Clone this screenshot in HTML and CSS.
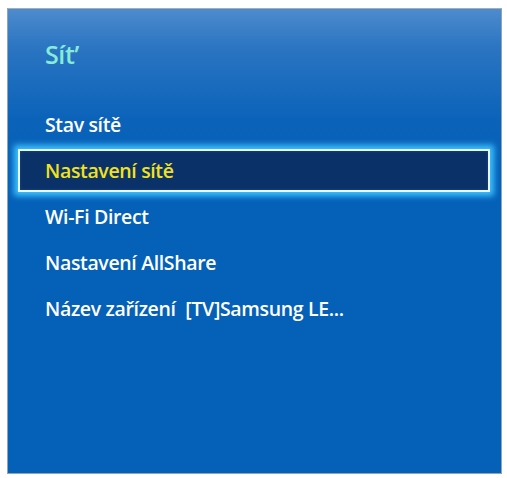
FILE: index.html
```html
<!DOCTYPE html>
<html lang="cs">
<head>
<meta charset="utf-8">
<title>Síť</title>
<link rel="stylesheet" href="styles.css">
</head>
<body>
<div class="panel">
  <div class="title">Sít’</div>
  <ul class="menu">
    <li class="item">Stav sítě</li>
    <li class="item selected">Nastavení sítě</li>
    <li class="item">Wi-Fi Direct</li>
    <li class="item">Nastavení AllShare</li>
    <li class="item">Název zařízení <span class="value">[TV]Samsung LE...</span></li>
  </ul>
</div>
</body>
</html>
```
FILE: styles.css
```css
html, body {
  margin: 0;
  padding: 0;
  background: #ffffff;
}
body {
  padding: 8px 5px 4px 7px;
  font-family: "Open Sans", "DejaVu Sans", sans-serif;
}
.panel {
  box-sizing: border-box;
  width: 495px;
  height: 466px;
  border: 1px solid #8fa3bd;
  border-top-color: #a3adb6;
  background: linear-gradient(to bottom, #4d8bcd 0px, #2a74c2 40px, #0b63b9 110px, #0560b8 160px, #0560b8 100%);
  display: flex;
  flex-direction: column;
}
.title {
  color: #86ecd6;
  font-size: 25px;
  font-weight: 600;
  line-height: 30px;
  padding: 30px 0 0 37px;
  letter-spacing: -0.4px;
}
.menu {
  list-style: none;
  margin: 33px 0 0 0;
  padding: 0;
  display: flex;
  flex-direction: column;
}
.item {
  color: #ffffff;
  font-size: 19.5px;
  font-weight: 600;
  letter-spacing: -0.35px;
  height: 46px;
  line-height: 46px;
  padding-left: 37px;
  white-space: nowrap;
}
.item.selected {
  box-sizing: border-box;
  color: #f2e21c;
  height: 43px;
  line-height: 39px;
  margin: 1px 11px 2px 10px;
  padding-left: 25px;
  border: 2px solid #eaf8ff;
  background: #0b3169;
  box-shadow: 0 0 6px 4px #3cc2ff, inset 0 0 3px #1a4c8c;
}
.value {
  margin-left: 5px;
}
```
